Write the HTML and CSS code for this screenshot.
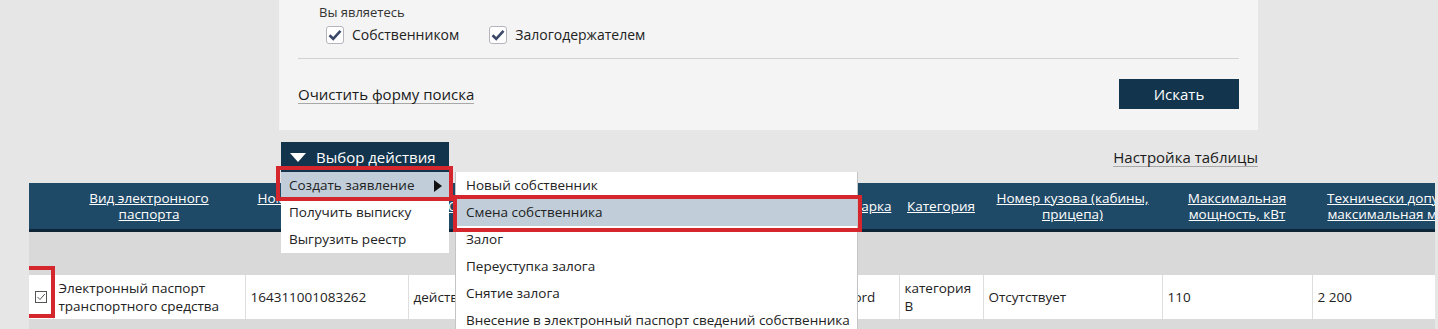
FILE: index.html
```html
<!DOCTYPE html>
<html lang="ru">
<head>
    <meta charset="UTF-8">
    <title>Реестр электронных паспортов</title>
    <link rel="stylesheet" href="styles.css">
</head>
<body>
    <div class="page">
        <section class="search">
            <div class="roles">
                <div class="roles-title">Вы являетесь</div>
                <div class="roles-list">
                    <label class="role">
                        <span class="box"><svg width="14" height="12" viewBox="0 0 14 12"><path d="M1.5 6.2 L5.2 9.8 L12.5 1.8" fill="none" stroke="#3b4868" stroke-width="2.6"/></svg></span>
                        Собственником
                    </label>
                    <label class="role">
                        <span class="box"><svg width="14" height="12" viewBox="0 0 14 12"><path d="M1.5 6.2 L5.2 9.8 L12.5 1.8" fill="none" stroke="#3b4868" stroke-width="2.6"/></svg></span>
                        Залогодержателем
                    </label>
                </div>
            </div>
            <div class="search-foot">
                <a class="link" href="#">Очистить форму поиска</a>
                <button class="btn-search" type="button">Искать</button>
            </div>
        </section>

        <div class="toolbar">
            <div class="actions">
                <button class="btn-actions" type="button"><span class="tri"></span>Выбор действия</button>
                <ul class="menu">
                    <li class="active marked">Создать заявление<span class="arrow"></span></li>
                    <li>Получить выписку</li>
                    <li>Выгрузить реестр</li>
                </ul>
                <ul class="submenu">
                    <li>Новый собственник</li>
                    <li class="active marked">Смена собственника</li>
                    <li>Залог</li>
                    <li>Переуступка залога</li>
                    <li>Снятие залога</li>
                    <li>Внесение в электронный паспорт сведений собственника</li>
                </ul>
            </div>
            <a class="link" href="#">Настройка таблицы</a>
        </div>

        <div class="grid-wrap">
            <table class="grid">
                <colgroup>
                    <col style="width:24px">
                    <col style="width:192px">
                    <col style="width:163px">
                    <col style="width:122px">
                    <col style="width:170px">
                    <col style="width:141px">
                    <col style="width:58px">
                    <col style="width:84px">
                    <col style="width:179px">
                    <col style="width:150px">
                    <col style="width:188px">
                </colgroup>
                <thead>
                    <tr>
                        <th></th>
                        <th><a href="#">Вид электронного паспорта</a></th>
                        <th><a href="#">Номер электронного паспорта</a></th>
                        <th><a href="#">Статус</a></th>
                        <th><a href="#">VIN</a></th>
                        <th><a href="#">Тип ТС</a></th>
                        <th><a href="#">Марка</a></th>
                        <th><a href="#">Категория</a></th>
                        <th><a href="#">Номер кузова (кабины, прицепа)</a></th>
                        <th><a href="#">Максимальная мощность, кВт</a></th>
                        <th><a href="#">Технически допустимая максимальная масса, кг</a></th>
                    </tr>
                </thead>
                <tbody>
                    <tr class="filters">
                        <td colspan="11"></td>
                    </tr>
                    <tr class="row">
                        <td class="chk"><span class="chk-wrap"><span class="tick"><svg width="10" height="10" viewBox="0 0 10 10"><path d="M1.5 5 L4 7.5 L8.8 2" fill="none" stroke="#555" stroke-width="1"/></svg></span></span></td>
                        <td>Электронный паспорт транспортного средства</td>
                        <td>164311001083262</td>
                        <td>действует</td>
                        <td>XW8ZZZ61ZKG000000</td>
                        <td>Легковой</td>
                        <td>Ford</td>
                        <td>категория В</td>
                        <td>Отсутствует</td>
                        <td>110</td>
                        <td>2 200</td>
                    </tr>
                    <tr class="rest">
                        <td colspan="11"></td>
                    </tr>
                </tbody>
            </table>
        </div>
    </div>
</body>
</html>
```

FILE: styles.css
```css
body {
    margin: 0;
    background-color: #e6e6e6;
    font-family: "Open Sans", "Noto Sans", sans-serif;
    color: #222;
}

.page {
    width: 1438px;
    height: 329px;
    overflow: hidden;
}

/* search panel */

.search {
    margin-left: 279px;
    width: 979px;
    height: 130px;
    box-sizing: border-box;
    padding: 0 19px;
    background-color: #f4f4f4;
}

.roles {
    height: 59px;
    box-sizing: border-box;
    padding: 4px 0 0 21px;
    border-bottom: 1px solid #d2d2d2;
}

.roles-title {
    font-size: 13px;
    line-height: 16px;
    color: #333;
}

.roles-list {
    display: flex;
    gap: 30px;
    margin-top: 5px;
    padding-left: 7px;
}

.role {
    display: flex;
    align-items: center;
    gap: 8px;
    font-size: 14px;
    color: #222;
}

.box {
    width: 18px;
    height: 18px;
    box-sizing: border-box;
    border: 1px solid #b4b4bc;
    border-radius: 3px;
    background-color: #fff;
    display: flex;
    align-items: center;
    justify-content: center;
}

.search-foot {
    height: 70px;
    display: flex;
    align-items: center;
    justify-content: space-between;
}

.link {
    font-size: 15px;
    line-height: 18px;
    color: #1a1a1a;
    text-decoration: none;
    border-bottom: 1px solid #a8a8a8;
}

.btn-search {
    width: 120px;
    height: 30px;
    border: none;
    background-color: #12344d;
    color: #fff;
    font-family: inherit;
    font-size: 15px;
}

/* toolbar with actions */

.toolbar {
    margin: 12px 0 0 281px;
    width: 977px;
    height: 30px;
    display: flex;
    align-items: center;
    justify-content: space-between;
}

.actions {
    position: relative;
    z-index: 10;
}

.btn-actions {
    width: 168px;
    height: 30px;
    padding: 0 0 0 9px;
    display: flex;
    align-items: center;
    gap: 10px;
    border: none;
    background-color: #12344d;
    color: #fff;
    font-family: inherit;
    font-size: 15px;
}

.tri {
    width: 0;
    height: 0;
    border-left: 8px solid transparent;
    border-right: 8px solid transparent;
    border-top: 9px solid #fff;
}

.menu,
.submenu {
    position: absolute;
    top: 30px;
    margin: 0;
    padding: 0;
    list-style: none;
    background-color: #fff;
    font-size: 13.5px;
}

.menu {
    left: 0;
    width: 168px;
}

.submenu {
    left: 174px;
    width: 403px;
    border: 1px solid #c4c4c4;
    border-top: none;
    box-sizing: border-box;
}

.menu li,
.submenu li {
    position: relative;
    height: 27px;
    line-height: 27px;
    padding-left: 8px;
    white-space: nowrap;
}

.submenu li {
    padding-left: 10px;
}

.menu li.active,
.submenu li.active {
    background-color: #c1ceda;
}

.arrow {
    position: absolute;
    right: 7px;
    top: 8px;
    width: 0;
    height: 0;
    border-top: 6px solid transparent;
    border-bottom: 6px solid transparent;
    border-left: 8px solid #111;
}

/* red annotation frames */

.marked::after {
    content: "";
    position: absolute;
    border: 4px solid #d5262d;
}

.menu li.marked::after {
    top: -6px;
    bottom: -2px;
    left: -5px;
    right: -4px;
}

.submenu li.marked::after {
    top: -4px;
    bottom: -6px;
    left: -3px;
    right: -5px;
}

/* table */

.grid-wrap {
    margin: 11px 0 0 29px;
    width: 1406px;
    height: 200px;
    overflow: hidden;
    background-color: #dadada;
}

.grid {
    width: 1471px;
    table-layout: fixed;
    border-collapse: collapse;
    font-size: 13.5px;
}

.grid th {
    height: 46px;
    padding: 0 8px;
    background-color: #1f4a67;
    border-bottom: 3px solid #0d2536;
    font-weight: normal;
    line-height: 16px;
    text-align: center;
}

.grid th a {
    color: #fff;
}

.filters td {
    height: 43px;
    padding: 0;
    background-color: #d9d9d9;
}

.row td {
    height: 44px;
    padding: 0 5px;
    background-color: #fff;
    border-left: 1px solid #dedede;
    line-height: 18px;
    color: #222;
    vertical-align: middle;
}

.row td.chk {
    padding: 0;
    border-left: none;
}

.chk-wrap {
    position: relative;
    display: flex;
    justify-content: center;
}

.chk-wrap::after {
    content: "";
    position: absolute;
    top: -25px;
    bottom: -15px;
    left: -7px;
    right: -2px;
    border: 4px solid #d5262d;
}

.tick {
    width: 12px;
    height: 12px;
    box-sizing: border-box;
    border: 1px solid #555;
    display: flex;
    align-items: center;
    justify-content: center;
}

.rest td {
    height: 30px;
    background-color: #dadada;
}
```
